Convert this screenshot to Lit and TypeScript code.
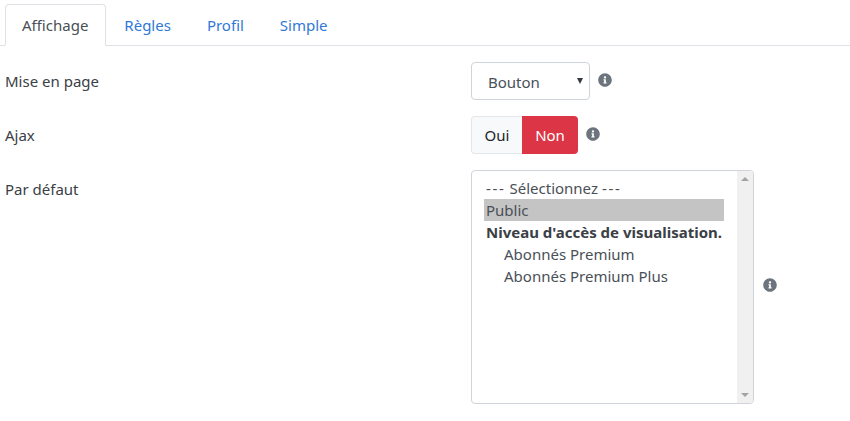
import { LitElement, html, css, svg } from "lit";
import { customElement, property } from "lit/decorators.js";

const infoIcon = svg`<path d="M256 8C119 8 8 119 8 256s111 248 248 248 248-111 248-248S393 8 256 8zm0 110c23.200 0 42 18.800 42 42s-18.800 42-42 42-42-18.800-42-42 18.800-42 42-42zm56 254c0 6.600-5.400 12-12 12h-88c-6.600 0-12-5.400-12-12v-24c0-6.600 5.400-12 12-12h12v-64h-12c-6.600 0-12-5.400-12-12v-24c0-6.600 5.400-12 12-12h64c6.600 0 12 5.400 12 12v100h12c6.600 0 12 5.400 12 12v24z"/>`;

@customElement("info-tip")
export class InfoTip extends LitElement {
  static styles = css`
    :host {
      display: block;
      width: 14px;
      height: 14px;
    }
    svg {
      display: block;
      width: 14px;
      height: 14px;
      fill: #6c757d;
    }
  `;

  protected render() {
    return html`<svg viewBox="0 0 512 512">${infoIcon}</svg>`;
  }
}

@customElement("tab-bar")
export class TabBar extends LitElement {
  @property({ type: Array }) tabs: string[] = [];
  @property() active = "";

  static styles = css`
    :host {
      display: flex;
      padding: 4px 0 0 5px;
      border-bottom: 1px solid #dee2e6;
    }
    .tab {
      height: 40px;
      padding: 0 17px;
      margin-bottom: -1px;
      display: flex;
      align-items: center;
      color: #2f78d6;
      border: 1px solid transparent;
      border-radius: 4px 4px 0 0;
    }
    .tab.on {
      padding: 0 17px 0 16px;
      color: #495057;
      background: #fff;
      border-color: #dee2e6 #dee2e6 #fff;
    }
  `;

  protected render() {
    return this.tabs.map(
      (t) => html`<div class="tab ${t === this.active ? "on" : ""}">${t}</div>`
    );
  }
}

@customElement("app-root")
export class AppRoot extends LitElement {
  static styles = css`
    :host {
      display: block;
      height: 421px;
      overflow: hidden;
      background: #fff;
      color: #3a4046;
      font-family: "Noto Sans", "Open Sans", sans-serif;
      font-size: 15px;
    }
    .form {
      display: grid;
      grid-template-columns: 466px 1fr;
      padding: 16px 0 0 5px;
      row-gap: 16px;
    }
    .label {
      padding-top: 8px;
      line-height: 22px;
    }
    .control {
      display: flex;
      align-items: flex-start;
    }
    .dropdown {
      box-sizing: border-box;
      width: 119px;
      height: 38px;
      padding: 1px 6px 0 16px;
      display: flex;
      align-items: center;
      justify-content: space-between;
      color: #495057;
      border: 1px solid #ced4da;
      border-radius: 4px;
    }
    .caret {
      margin-top: -1px;
      border-left: 3px solid transparent;
      border-right: 3px solid transparent;
      border-top: 6px solid #343a40;
    }
    .control info-tip {
      margin: 11px 0 0 8px;
    }
    .toggle {
      display: flex;
      height: 38px;
    }
    .toggle div {
      box-sizing: border-box;
      display: flex;
      align-items: center;
      justify-content: center;
    }
    .oui {
      width: 51px;
      color: #212529;
      background: #f8f9fa;
      border: 1px solid #e4e7ea;
      border-right: 0;
      border-radius: 4px 0 0 4px;
    }
    .non {
      width: 56px;
      color: #fff;
      background: #dc3545;
      border-radius: 0 4px 4px 0;
    }
    .listbox {
      box-sizing: border-box;
      width: 283px;
      height: 234px;
      display: flex;
      border: 1px solid #ced4da;
      border-radius: 4px;
      overflow: hidden;
    }
    .options {
      flex: 1;
      padding: 6px 0 0 12px;
      color: #495057;
    }
    .opt {
      width: 240px;
      height: 22px;
      line-height: 22px;
      padding-left: 2px;
      box-sizing: border-box;
      white-space: nowrap;
    }
    .opt.selected {
      background: #c4c4c4;
    }
    .opt.group {
      font-weight: 700;
      color: #3a4046;
    }
    .opt.child {
      padding-left: 20px;
    }
    .dash {
      letter-spacing: 1.7px;
    }
    .scrollbar {
      width: 16px;
      background: #f0f0f0;
      display: flex;
      flex-direction: column;
      justify-content: space-between;
      align-items: center;
      padding: 6px 0;
    }
    .arrow-up {
      border-left: 4px solid transparent;
      border-right: 4px solid transparent;
      border-bottom: 4px solid #a3a3a3;
    }
    .arrow-down {
      border-left: 4px solid transparent;
      border-right: 4px solid transparent;
      border-top: 4px solid #a3a3a3;
    }
    .control info-tip.list-tip {
      align-self: center;
      margin: 0 0 4px 9px;
    }
  `;

  protected render() {
    return html`
      <tab-bar
        .tabs=${["Affichage", "Règles", "Profil", "Simple"]}
        active="Affichage"
      ></tab-bar>
      <div class="form">
        <div class="label">Mise en page</div>
        <div class="control">
          <div class="dropdown">Bouton <span class="caret"></span></div>
          <info-tip></info-tip>
        </div>

        <div class="label">Ajax</div>
        <div class="control">
          <div class="toggle">
            <div class="oui">Oui</div>
            <div class="non">Non</div>
          </div>
          <info-tip></info-tip>
        </div>

        <div class="label">Par défaut</div>
        <div class="control">
          <div class="listbox">
            <div class="options">
              <div class="opt"><span class="dash">---</span> Sélectionnez <span class="dash">---</span></div>
              <div class="opt selected">Public</div>
              <div class="opt group">Niveau d'accès de visualisation.</div>
              <div class="opt child">Abonnés Premium</div>
              <div class="opt child">Abonnés Premium Plus</div>
            </div>
            <div class="scrollbar">
              <span class="arrow-up"></span>
              <span class="arrow-down"></span>
            </div>
          </div>
          <info-tip class="list-tip"></info-tip>
        </div>
      </div>
    `;
  }
}
